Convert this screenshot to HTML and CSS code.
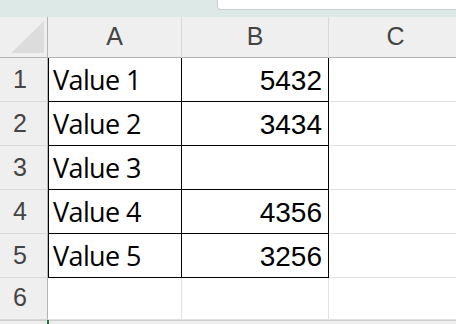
FILE: index.html
```html
<!DOCTYPE html>
<html>
<head>
<meta charset="utf-8">
<link rel="stylesheet" href="styles.css">
</head>
<body>
<div class="app">
  <div class="topstrip"><div class="namebox"></div></div>
  <div class="sheet">
    <div class="corner"><div class="selall"></div></div>
    <div class="colhead">A</div>
    <div class="colhead">B</div>
    <div class="colhead last">C</div>

    <div class="rowhead">1</div>
    <div class="cell txt bl">Value 1</div>
    <div class="cell num bl">5432</div>
    <div class="cell c"></div>

    <div class="rowhead">2</div>
    <div class="cell txt bl">Value 2</div>
    <div class="cell num bl">3434</div>
    <div class="cell c"></div>

    <div class="rowhead">3</div>
    <div class="cell txt bl">Value 3</div>
    <div class="cell num bl"></div>
    <div class="cell c"></div>

    <div class="rowhead">4</div>
    <div class="cell txt bl">Value 4</div>
    <div class="cell num bl">4356</div>
    <div class="cell c"></div>

    <div class="rowhead">5</div>
    <div class="cell txt bl">Value 5</div>
    <div class="cell num bl">3256</div>
    <div class="cell c"></div>

    <div class="rowhead short">6</div>
    <div class="cell short"></div>
    <div class="cell short"></div>
    <div class="cell short c"></div>
  </div>
  <div class="bottom"><div class="mark"></div></div>
</div>
</body>
</html>
```
FILE: styles.css
```css
* { box-sizing: border-box; }
html, body { margin: 0; padding: 0; }
body { width: 456px; height: 324px; overflow: hidden; background: #ffffff; }
.app { width: 456px; height: 324px; display: flex; flex-direction: column; overflow: hidden; }
.topstrip { height: 17px; background: #dde9e6; display: flex; justify-content: flex-end; flex: none; }
.namebox { width: 239px; height: 10px; background: #ffffff; border-left: 1px solid #c9cfcd; border-bottom: 1px solid #c9cfcd; border-bottom-left-radius: 4px; }
.sheet {
  display: grid;
  grid-template-columns: 48px 134px 147px 134px;
  grid-template-rows: 41px repeat(5, 44px) 42px;
  flex: none;
}
.corner { background: #efefef; border-right: 1px solid #b4b4b4; border-bottom: 1px solid #b4b4b4; position: relative; }
.selall { position: absolute; left: 11px; top: 4px; width: 33px; height: 32px; background: #dcdcdc; clip-path: polygon(100% 0, 100% 100%, 0 100%); }
.colhead {
  background: #efefef; border-right: 1px solid #d8d8d8; border-bottom: 1px solid #b4b4b4;
  font-family: "Liberation Sans", Arial, sans-serif; font-size: 25px; color: #444444;
  display: flex; align-items: flex-end; justify-content: center; padding-bottom: 8px; line-height: 1;
}
.rowhead {
  background: #efefef; border-right: 1px solid #b4b4b4; border-bottom: 1px solid #d8d8d8;
  font-family: "Liberation Sans", Arial, sans-serif; font-size: 25px; color: #444444;
  display: flex; align-items: flex-end; padding-left: 13px; padding-bottom: 9px; line-height: 1;
}
.cell { border-right: 1px solid #e1e1e1; border-bottom: 1px solid #e1e1e1; display: flex; align-items: flex-end; line-height: 1; color: #000000; }
.cell.bl { border-right-color: #000000; border-bottom-color: #000000; }
.txt { font-family: "Open Sans", sans-serif; font-size: 27px; padding-left: 5px; padding-bottom: 8px; letter-spacing: -0.6px; box-shadow: inset 1px 0 0 #000000; }
.num { font-family: "Liberation Sans", Arial, sans-serif; font-size: 28px; justify-content: flex-end; padding-right: 6px; padding-bottom: 6px; }
.bottom { flex: 1; background: #efefef; border-top: 1px solid #d0d0d0; position: relative; }
.mark { position: absolute; left: 47px; top: -1px; width: 2px; height: 6px; background: #217346; }
```
